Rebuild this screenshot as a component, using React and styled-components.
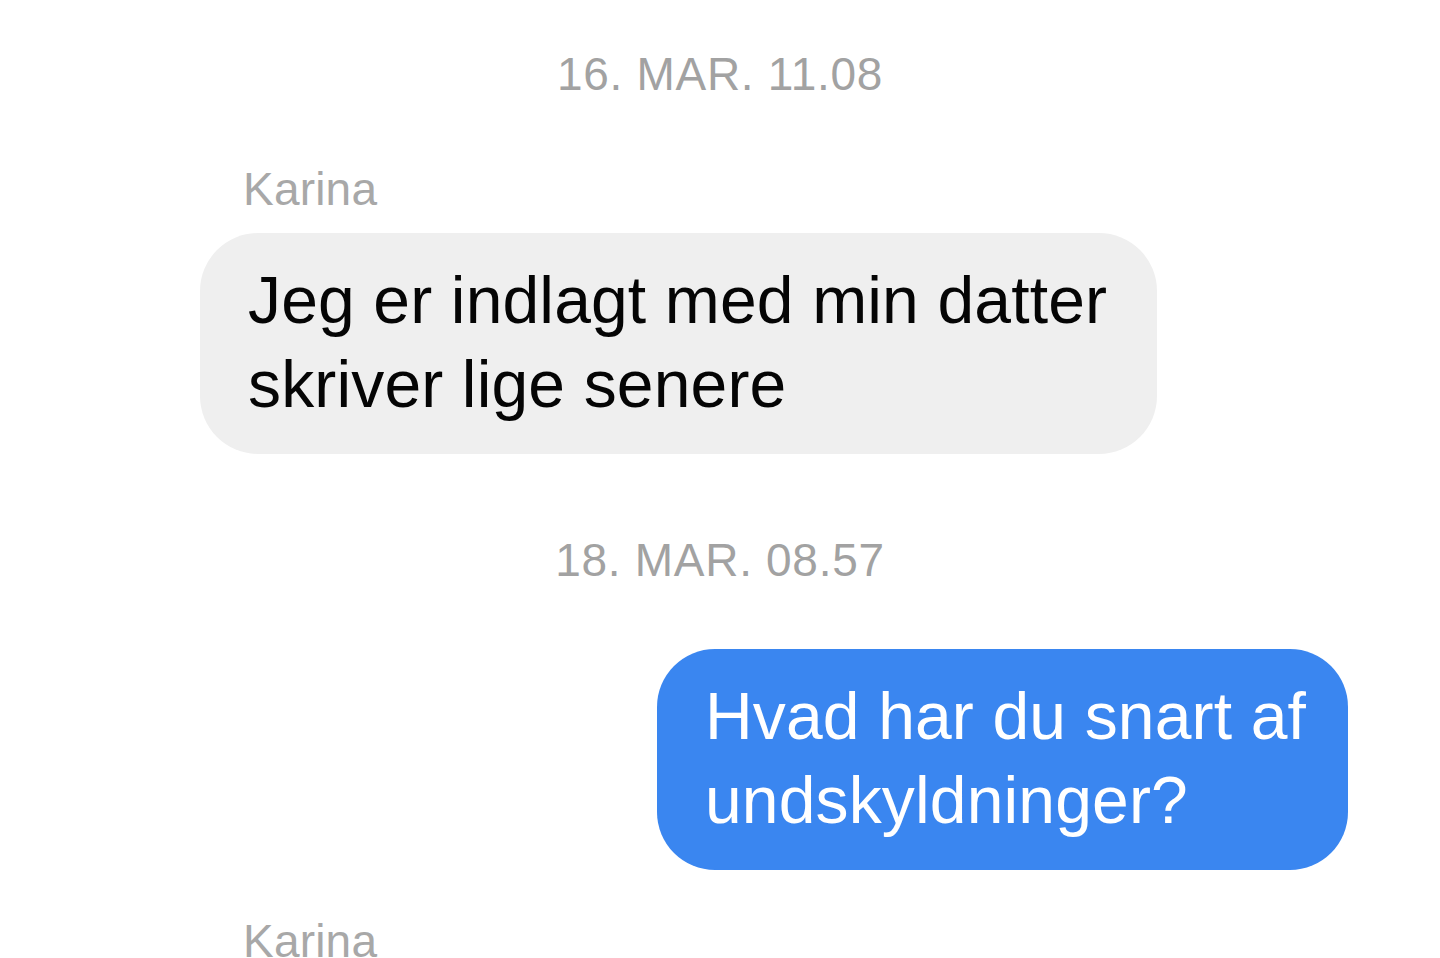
import React from "react";
import styled, { createGlobalStyle } from "styled-components";

const Global = createGlobalStyle`
  html, body { margin: 0; padding: 0; background: #ffffff; }
  body { font-family: "Liberation Sans", Arial, Helvetica, sans-serif; -webkit-font-smoothing: antialiased; }
`;

const Thread = styled.div`
  width: 1440px;
  height: 958px;
  overflow: hidden;
  box-sizing: border-box;
  padding-top: 47px;
  display: flex;
  flex-direction: column;
`;

const Stamp = styled.div`
  text-align: center;
  font-size: 46px;
  line-height: 54px;
  letter-spacing: 0.7px;
  color: #a2a2a2;
  margin-top: ${(p) => p.$top || 0}px;
`;

const Sender = styled.div`
  padding-left: 243px;
  font-size: 46px;
  line-height: 50px;
  letter-spacing: 0.2px;
  color: #a8a8a8;
  margin-top: ${(p) => p.$top || 0}px;
`;

const Row = styled.div`
  display: flex;
  justify-content: ${(p) => (p.$mine ? "flex-end" : "flex-start")};
  padding: 0 92px 0 200px;
  margin-top: ${(p) => p.$top || 0}px;
`;

const Bubble = styled.div`
  box-sizing: border-box;
  width: ${(p) => p.$w}px;
  padding: 25px 40px 28px 48px;
  border-radius: 58px;
  background: ${(p) => (p.$mine ? "#3a86f0" : "#efefef")};
  color: ${(p) => (p.$mine ? "#ffffff" : "#050505")};
  font-size: 66px;
  line-height: 84px;
  letter-spacing: 0.15px;
  white-space: nowrap;
`;

export default function App() {
  return (
    <>
      <Global />
      <Thread>
        <Stamp>16. MAR. 11.08</Stamp>
        <Sender $top={63}>Karina</Sender>
        <Row $top={19}>
          <Bubble $w={957}>
            Jeg er indlagt med min datter
            <br />
            skriver lige senere
          </Bubble>
        </Row>
        <Stamp $top={79}>18. MAR. 08.57</Stamp>
        <Row $mine $top={62}>
          <Bubble $mine $w={691}>
            Hvad har du snart af
            <br />
            undskyldninger?
          </Bubble>
        </Row>
        <Sender $top={46}>Karina</Sender>
      </Thread>
    </>
  );
}
